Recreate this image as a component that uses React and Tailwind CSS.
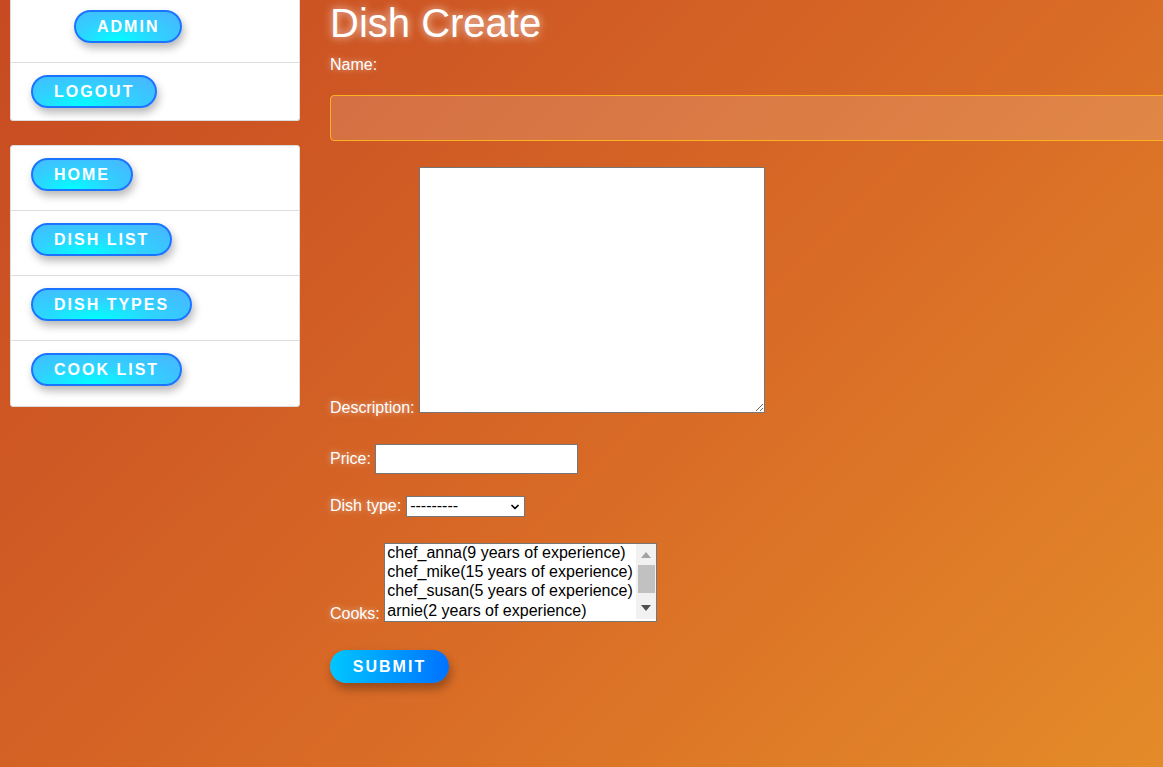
import React from 'react';
import { ChevronDown } from 'lucide-react';

const navBtn =
  'inline-flex h-[33px] items-center rounded-full border-2 border-[#1a74ff] bg-[radial-gradient(ellipse_at_40%_100%,#00ffff_0%,#2fd2ff_45%,#4bb3ff_100%)] px-[21px] text-[16px] font-bold uppercase tracking-[2px] text-white shadow-[2px_5px_9px_rgba(0,0,0,0.28)]';

const glow = '[text-shadow:0_0_6px_rgba(255,255,255,0.55)]';

const cooks = [
  'chef_anna(9 years of experience)',
  'chef_mike(15 years of experience)',
  'chef_susan(5 years of experience)',
  'arnie(2 years of experience)',
  'chef_lucas(7 years of experience)',
  'chef_olga(11 years of experience)',
];

function NavRow({ label, last, className = '' }) {
  return (
    <div className={`flex h-[65px] items-start pt-[12px] ${last ? '' : 'border-b border-[#dedede]'}`}>
      <a href="#" className={`${navBtn} ${className}`}>{label}</a>
    </div>
  );
}

export default function App() {
  return (
    <div className="flex h-screen overflow-hidden bg-[linear-gradient(135deg,#c74a22_0%,#d86a26_55%,#e48b29_100%)] font-['Liberation_Sans',Arial,sans-serif]">
      <aside className="ml-[10px] w-[290px] shrink-0">
        <div className="rounded-b-[3px] border border-t-0 border-[#dcdcdc] bg-white">
          <div className="flex h-[63px] items-start border-b border-[#dedede] pt-[10px]">
            <a href="#" className={`${navBtn} ml-[63px]`}>Admin</a>
          </div>
          <div className="flex h-[57px] items-start pt-[12px]">
            <a href="#" className={`${navBtn} ml-[20px]`}>Logout</a>
          </div>
        </div>

        <div className="mt-[24px] rounded-[3px] border border-[#dcdcdc] bg-white">
          <NavRow label="Home" className="ml-[20px]" />
          <NavRow label="Dish list" className="ml-[20px]" />
          <NavRow label="Dish types" className="ml-[20px]" />
          <NavRow label="Cook list" className="ml-[20px]" last />
        </div>
      </aside>

      <main className="ml-[30px] min-w-0 flex-1 text-[16px] text-white">
        <h1 className="text-[40px] leading-[46px] [text-shadow:0_0_8px_rgba(255,255,255,0.8)]">Dish Create</h1>
        <form onSubmit={(e) => e.preventDefault()}>
          <p className={`mt-[10px] leading-[18px] ${glow}`}>Name:</p>
          <input
            type="text"
            className="mt-[21px] block h-[46px] w-[1000px] rounded-[4px] border border-[#ffb323] bg-white/15 px-3 text-white outline-none"
          />

          <div className="mt-[26px]">
            <label className={glow}>Description:</label>{' '}
            <textarea className="h-[246px] w-[346px] border border-[#767676] bg-white text-[13px] text-black" />
          </div>

          <div className="mt-[24px] flex items-center gap-[4px]">
            <label className={glow}>Price:</label>
            <input type="number" className="h-[30px] w-[203px] border border-[#767676] bg-white text-black outline-none" />
          </div>

          <div className="mt-[20px] flex items-center gap-[5px]">
            <label className={glow}>Dish type:</label>
            <div className="relative">
              <select className="block h-[21px] w-[119px] appearance-none border border-[#767676] bg-white pl-[3px] text-[16px] leading-none text-black">
                <option>---------</option>
              </select>
              <ChevronDown className="pointer-events-none absolute right-[4px] top-[5px] h-[12px] w-[12px] text-black" strokeWidth={3.5} />
            </div>
          </div>

          <div className="mt-[25px]">
            <label className={glow}>Cooks:</label>{' '}
            <span className="relative inline-block">
              <select multiple className="h-[79px] w-[273px] border border-[#767676] bg-white pl-[2px] text-[16px] text-black">
                {cooks.map((c) => (
                  <option key={c}>{c}</option>
                ))}
              </select>
              <span className="pointer-events-none absolute bottom-[7px] right-[1px] top-[1px] flex w-[20px] flex-col items-center bg-[#f1f1f1] pt-[8px]">
                <span className="h-0 w-0 border-x-[5px] border-b-[6px] border-x-transparent border-b-[#a3a3a3]" />
                <span className="mt-[7px] h-[28px] w-[17px] bg-[#c1c1c1]" />
                <span className="mt-[12px] h-0 w-0 border-x-[5px] border-t-[6px] border-x-transparent border-t-[#505050]" />
              </span>
            </span>
          </div>

          <button
            type="submit"
            className="mt-[24px] flex h-[33px] w-[119px] items-center justify-center rounded-full bg-[linear-gradient(to_right,#00c6ff,#0072ff)] text-[16px] font-bold uppercase tracking-[2px] text-white shadow-[2px_6px_10px_rgba(0,0,0,0.3)]"
          >
            Submit
          </button>
        </form>
      </main>
    </div>
  );
}
